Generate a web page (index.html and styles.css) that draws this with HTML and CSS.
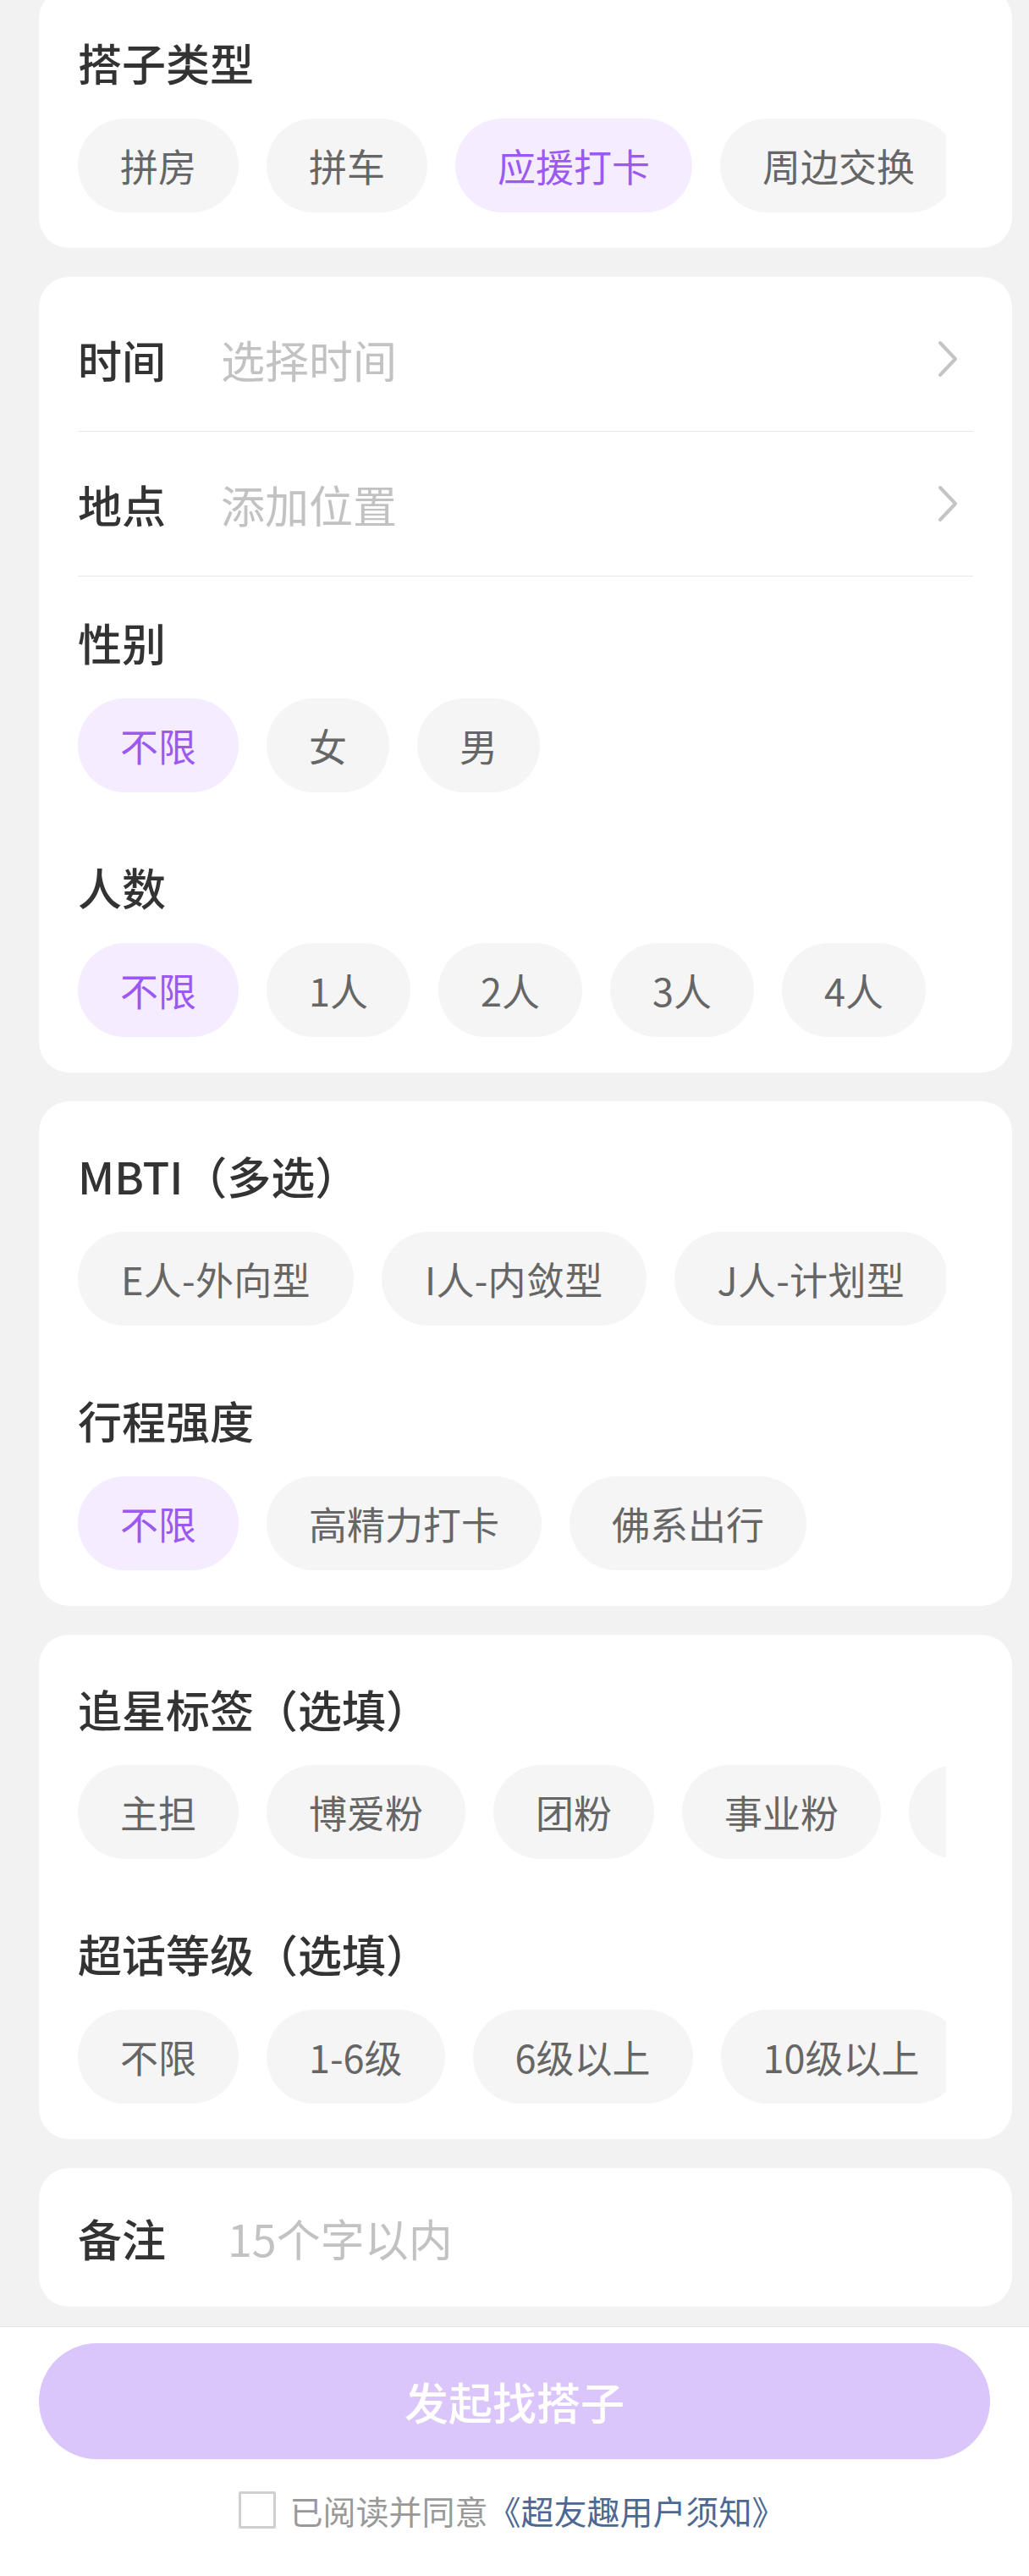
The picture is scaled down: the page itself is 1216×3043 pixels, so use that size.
FILE: index.html
```html
<!DOCTYPE html>
<html lang="zh-CN">
<head>
    <meta charset="UTF-8">
    <meta name="viewport" content="width=device-width, initial-scale=1.0">
    <title>发起找搭子</title>
    <link rel="stylesheet" href="styles.css">
</head>
<body>
    <main class="page">
        <!-- 搭子类型 -->
        <section class="card">
            <div class="block">
                <h3 class="block-title">搭子类型</h3>
                <div class="chips">
                    <span class="chip">拼房</span>
                    <span class="chip">拼车</span>
                    <span class="chip active">应援打卡</span>
                    <span class="chip">周边交换</span>
                </div>
            </div>
        </section>

        <!-- 时间 / 地点 / 性别 / 人数 -->
        <section class="card card-rows">
            <div class="row">
                <span class="row-label">时间</span>
                <span class="row-value">选择时间</span>
                <svg class="arrow" width="24" height="44" viewBox="0 0 24 44">
                    <polyline points="3,3 21,22 3,41" fill="none" stroke="#c4c4c4" stroke-width="4" stroke-linecap="round" stroke-linejoin="round"/>
                </svg>
            </div>
            <div class="row">
                <span class="row-label">地点</span>
                <span class="row-value">添加位置</span>
                <svg class="arrow" width="24" height="44" viewBox="0 0 24 44">
                    <polyline points="3,3 21,22 3,41" fill="none" stroke="#c4c4c4" stroke-width="4" stroke-linecap="round" stroke-linejoin="round"/>
                </svg>
            </div>
            <div class="block after-rows">
                <h3 class="block-title">性别</h3>
                <div class="chips">
                    <span class="chip active">不限</span>
                    <span class="chip">女</span>
                    <span class="chip">男</span>
                </div>
            </div>
            <div class="block">
                <h3 class="block-title">人数</h3>
                <div class="chips">
                    <span class="chip active">不限</span>
                    <span class="chip">1人</span>
                    <span class="chip">2人</span>
                    <span class="chip">3人</span>
                    <span class="chip">4人</span>
                </div>
            </div>
        </section>

        <!-- MBTI / 行程强度 -->
        <section class="card">
            <div class="block">
                <h3 class="block-title">MBTI（多选）</h3>
                <div class="chips">
                    <span class="chip chip-latin">E人-外向型</span>
                    <span class="chip chip-latin">I人-内敛型</span>
                    <span class="chip chip-latin">J人-计划型</span>
                </div>
            </div>
            <div class="block">
                <h3 class="block-title">行程强度</h3>
                <div class="chips">
                    <span class="chip active">不限</span>
                    <span class="chip">高精力打卡</span>
                    <span class="chip">佛系出行</span>
                </div>
            </div>
        </section>

        <!-- 追星标签 / 超话等级 -->
        <section class="card">
            <div class="block">
                <h3 class="block-title">追星标签（选填）</h3>
                <div class="chips">
                    <span class="chip">主担</span>
                    <span class="chip">博爱粉</span>
                    <span class="chip">团粉</span>
                    <span class="chip">事业粉</span>
                    <span class="chip chip-more"></span>
                </div>
            </div>
            <div class="block">
                <h3 class="block-title">超话等级（选填）</h3>
                <div class="chips">
                    <span class="chip">不限</span>
                    <span class="chip">1-6级</span>
                    <span class="chip">6级以上</span>
                    <span class="chip">10级以上</span>
                </div>
            </div>
        </section>

        <!-- 备注 -->
        <section class="card">
            <div class="row row-note">
                <span class="row-label">备注</span>
                <span class="row-value">15个字以内</span>
            </div>
        </section>
    </main>

    <footer class="bottom-bar">
        <button class="submit-btn">发起找搭子</button>
        <div class="agree">
            <span class="checkbox"></span>
            <span class="agree-text">已阅读并同意<a href="#" class="agree-link">《超友趣用户须知》</a></span>
        </div>
    </footer>
</body>
</html>
```

FILE: styles.css
```css
body {
    margin: 0;
    padding: 0;
    background-color: #f2f2f2;
    font-family: "Noto Sans CJK SC", "Noto Sans", sans-serif;
    color: #333;
}
.page {
    margin-top: -14px;
    padding: 0 20px 23px 46px;
}
.card {
    background-color: #fff;
    border-radius: 36px;
    padding: 0 46px 42px;
    margin-bottom: 34px;
}
.card:last-child {
    margin-bottom: 0;
    padding-bottom: 0;
}
.block {
    padding-top: 77px;
}
.card > .block:first-child {
    padding-top: 53px;
}
.block.after-rows {
    padding-top: 43px;
}
.block-title {
    margin: 0 0 31px;
    font-size: 52px;
    line-height: 70px;
    font-weight: 500;
    color: #333;
}
.chips {
    display: flex;
    gap: 33px;
    margin-right: 32px;
    overflow: hidden;
}
.chip {
    flex: 0 0 auto;
    height: 111px;
    line-height: 111px;
    padding: 0 50px;
    border-radius: 56px;
    background-color: #f5f5f5;
    color: #666;
    font-size: 45px;
    white-space: nowrap;
}
.chip-latin {
    padding: 0 51px;
    letter-spacing: 0.3px;
}
.chip-more {
    width: 90px;
}
.chip.active {
    background-color: #f5edff;
    color: #9b59f2;
}
.card-rows {
    padding-top: 12px;
}
.row {
    display: flex;
    align-items: center;
    height: 170px;
    border-bottom: 1px solid #e8e8e8;
}
.row-label {
    flex: 0 0 169px;
    font-size: 52px;
    font-weight: 500;
    color: #333;
}
.row-value {
    flex: 1;
    font-size: 52px;
    color: #c2c2c2;
}
.arrow {
    margin-right: 18px;
}
.row-note {
    height: 164px;
    border-bottom: none;
}
.row-note .row-value {
    padding-left: 8px;
}
.bottom-bar {
    background-color: #fff;
    border-top: 1px solid #e6e6e6;
    padding: 19px 46px 53px;
}
.submit-btn {
    display: block;
    width: 100%;
    height: 137px;
    border: none;
    border-radius: 69px;
    background-color: #dbc6fc;
    color: #fff;
    font-family: inherit;
    font-size: 52px;
    font-weight: 500;
}
.agree {
    display: flex;
    align-items: center;
    justify-content: center;
    height: 50px;
    margin-top: 35px;
    padding-right: 6px;
}
.checkbox {
    width: 38px;
    height: 38px;
    border: 3px solid #cfcfcf;
    border-radius: 2px;
    margin-right: 16px;
}
.agree-text {
    font-size: 39px;
    color: #999;
}
.agree-link {
    color: #4d6892;
    text-decoration: none;
}
```
